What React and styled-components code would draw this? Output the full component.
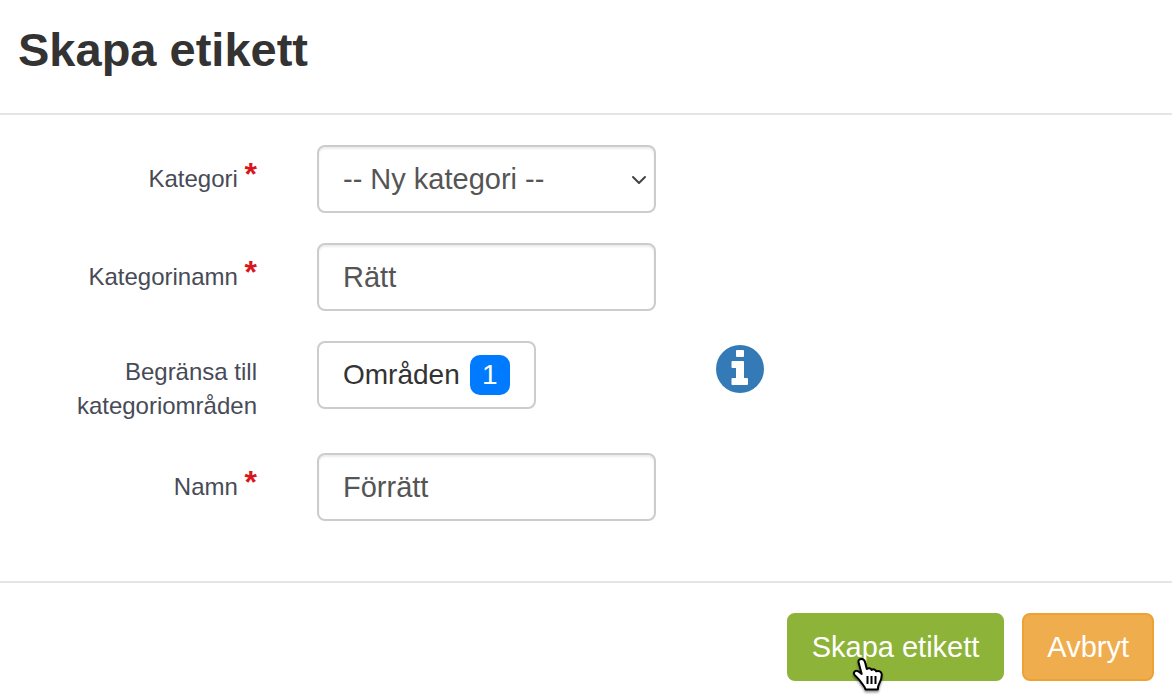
import { useState } from "react";
import styled, { createGlobalStyle, css } from "styled-components";

const GlobalStyle = createGlobalStyle`
  *,
  *::before,
  *::after {
    box-sizing: border-box;
  }

  body {
    margin: 0;
    background: #fff;
    color: #333;
    font-family: "Liberation Sans", "Helvetica Neue", Helvetica, Arial, sans-serif;
  }

  button,
  input,
  select {
    font-family: inherit;
  }
`;

const App = () => {
  const [categoryName, setCategoryName] = useState("Rätt");
  const [name, setName] = useState("Förrätt");

  return (
    <>
      <GlobalStyle />
      <Form onSubmit={(e) => e.preventDefault()}>
        <Header>
          <Title>Skapa etikett</Title>
        </Header>

        <Body>
          <Row>
            <Label htmlFor="category">
              Kategori <Required>*</Required>
            </Label>
            <SelectWrapper>
              <Select id="category" defaultValue="new">
                <option value="new">-- Ny kategori --</option>
              </Select>
              <Chevron viewBox="0 0 16 10" aria-hidden="true">
                <path d="M2 2L8 8L14 2" />
              </Chevron>
            </SelectWrapper>
          </Row>

          <Row>
            <Label htmlFor="category-name">
              Kategorinamn <Required>*</Required>
            </Label>
            <Input
              id="category-name"
              type="text"
              value={categoryName}
              onChange={(e) => setCategoryName(e.target.value)}
            />
          </Row>

          <Row>
            <Label htmlFor="areas">Begränsa till kategoriområden</Label>
            <AreasButton id="areas" type="button">
              Områden <Badge>1</Badge>
            </AreasButton>
            <InfoButton type="button" aria-label="Information">
              <svg width="48" height="48" viewBox="0 0 48 48">
                <circle cx="24" cy="24" r="24" fill="#337ab7" />
                <path
                  fill="#fff"
                  d="M21 5h6q1 0 1 1v5q0 1-1 1h-6q-1 0-1-1V6q0-1 1-1zM16.500 16H27q1 0 1 1v16h3q1 0 1 1v5q0 1-1 1H16.500q-1 0-1-1v-5q0-1 1-1H20V23h-3.500q-1 0-1-1v-5q0-1 1-1z"
                />
              </svg>
            </InfoButton>
          </Row>

          <Row>
            <Label htmlFor="name">
              Namn <Required>*</Required>
            </Label>
            <Input
              id="name"
              type="text"
              value={name}
              onChange={(e) => setName(e.target.value)}
            />
          </Row>
        </Body>

        <Footer>
          <Button type="submit" $variant="success">
            Skapa etikett
            <Pointer viewBox="0 0 34 38" aria-hidden="true">
              <path
                fill="#fff"
                stroke="#000"
                strokeWidth="2"
                strokeLinejoin="round"
                d="M9.500 2C11.500 2 12.500 3.200 13 5L14.800 12C16.200 10.800 18.900 11 19.600 13C21.200 11.800 23.600 12.300 24.300 14.300C26.600 13.300 29.500 14.400 29.700 17.200C29.900 21 28.900 23.500 27.500 26C26.400 28 25.800 30 25.800 32.500H13.500C12.900 29.500 10.500 27.500 8.500 24.500C6.900 22 4.200 20 2.300 17.500C1 15.300 3.500 12.600 6.200 14.300L9.700 17L6.600 5.500C6 3.300 7.400 2 9.500 2Z"
              />
              <path stroke="#000" strokeWidth="2" d="M15.500 19v8M19.500 19v8M23.500 19v8" />
            </Pointer>
          </Button>
          <Button type="button" $variant="warning">
            Avbryt
          </Button>
        </Footer>
      </Form>
    </>
  );
};

const Form = styled.form`
  width: 100%;
`;

const Header = styled.header`
  padding: 20px 18px 33px;
  border-bottom: 2px solid #e5e5e5;
`;

const Title = styled.h1`
  margin: 0;
  font-size: 47px;
  font-weight: bold;
  line-height: 60px;
`;

const Body = styled.div`
  display: flex;
  flex-direction: column;
  gap: 30px;
  padding: 30px 0 60px;
`;

const Row = styled.div`
  display: grid;
  grid-template-columns: minmax(0, 257fr) minmax(0, 339fr) minmax(0, 456fr);
  column-gap: 60px;
  align-items: start;
`;

const Label = styled.label`
  padding: 14px 0 0 16px;
  color: #474b57;
  font-size: 24px;
  line-height: 34px;
  text-align: right;
`;

const Required = styled.span`
  color: #d9161c;
  font-size: 32px;
  font-weight: bold;
  line-height: 30px;
  vertical-align: 2px;
`;

const control = css`
  height: 68px;
  border: 2px solid #ccc;
  border-radius: 8px;
  background: #fff;
  font-size: 29px;
`;

const field = css`
  ${control}
  width: 100%;
  padding: 0 24px;
  box-shadow: inset 0 2px 2px rgba(0, 0, 0, 0.075);
  color: #555;
`;

const Input = styled.input`
  ${field}
`;

const SelectWrapper = styled.div`
  position: relative;
`;

const Select = styled.select`
  ${field}
  appearance: none;
`;

const Chevron = styled.svg`
  position: absolute;
  top: 30px;
  right: 9px;
  width: 16px;
  height: 10px;
  fill: none;
  stroke: #444;
  stroke-width: 2;
  stroke-linecap: round;
  stroke-linejoin: round;
  pointer-events: none;
`;

const AreasButton = styled.button`
  ${control}
  display: flex;
  align-items: center;
  gap: 10px;
  justify-self: start;
  padding: 0 24px;
  color: #333;
  font-size: 28px;
`;

const Badge = styled.span`
  width: 40px;
  border-radius: 10px;
  background: #007bff;
  color: #fff;
  line-height: 40px;
  text-align: center;
`;

const InfoButton = styled.button`
  display: flex;
  justify-self: start;
  margin-top: 4px;
  padding: 0;
  border: 0;
  background: none;
`;

const Footer = styled.footer`
  display: flex;
  justify-content: flex-end;
  gap: 18px;
  padding: 30px 18px 18px;
  border-top: 2px solid #e5e5e5;
`;

const variants = {
  success: { background: "#8db338", border: "#8db338" },
  warning: { background: "#f0ad4e", border: "#eea236" },
};

const Button = styled.button`
  ${control}
  position: relative;
  padding: 0 23px;
  border-color: ${({ $variant }) => variants[$variant].border};
  background: ${({ $variant }) => variants[$variant].background};
  color: #fff;
`;

const Pointer = styled.svg`
  position: absolute;
  top: 42px;
  left: 63px;
  width: 34px;
  height: 38px;
  fill: none;
  filter: drop-shadow(0 2px 1px rgba(0, 0, 0, 0.4));
  pointer-events: none;
`;

export default App;
